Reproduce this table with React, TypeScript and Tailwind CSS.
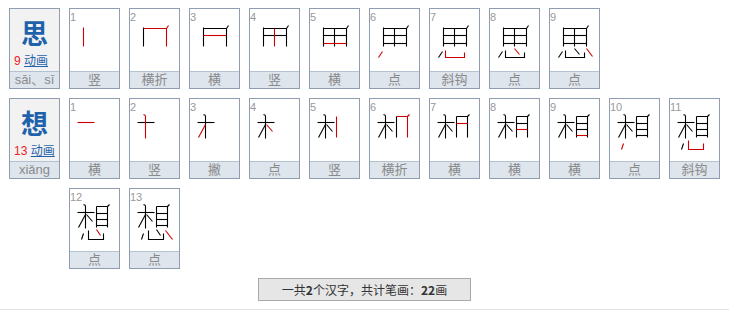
type Stroke = { name: string; lines: string[] };

// stroke drawings, coordinates measured from the card's outer top-left corner
const SI: Stroke[] = [
  { name: "竖", lines: ["14,19 14,38"] },
  { name: "横折", lines: ["14,20 37,20 37,38", "37,20 39,17"] },
  { name: "横", lines: ["14,27 37,27"] },
  { name: "竖", lines: ["25,20 25,38"] },
  { name: "横", lines: ["14,35 37,35"] },
  { name: "点", lines: ["13,43 9,49"] },
  { name: "斜钩", lines: ["16,42 16,49 35,49 35,44"] },
  { name: "点", lines: ["25,40 30,46"] },
  { name: "点", lines: ["37,40 43,48"] },
];

const XIANG: Stroke[] = [
  { name: "横", lines: ["8,24 25,24"] },
  { name: "竖", lines: ["16,17 16,40", "14,16 16,17"] },
  { name: "撇", lines: ["16,26 9,39"] },
  { name: "点", lines: ["17,26 23,33"] },
  { name: "竖", lines: ["27,18 27,39"] },
  { name: "横折", lines: ["27,18 38,18 38,39", "38,18 40,16"] },
  { name: "横", lines: ["27,25 38,25"] },
  { name: "横", lines: ["27,31 38,31"] },
  { name: "横", lines: ["27,37 38,37"] },
  { name: "点", lines: ["14,45 12,51"] },
  { name: "斜钩", lines: ["19,42 19,51 34,51 34,45"] },
  { name: "点", lines: ["27,41 31,47"] },
  { name: "点", lines: ["36,42 43,51"] },
];

function HeadCard({
  char,
  count,
  pinyin,
}: {
  char: string;
  count: number;
  pinyin: string;
}) {
  return (
    <div className="flex h-[81px] w-[51px] shrink-0 flex-col border border-[#8e9db0]">
      <div className="flex h-[62px] flex-col bg-[#f2f2f2]">
        <div className="mt-[13px] text-center text-[27px] font-bold leading-[26px] text-[#1e62ab]">
          {char}
        </div>
        <div className="mt-[6px] whitespace-nowrap pl-[4px] text-[12px] leading-[14px]">
          <span className="text-[#e8232b]">{count}</span>{" "}
          <span className="text-[#1e62ab] underline">动画</span>
        </div>
      </div>
      <div className="h-[17px] border-t border-[#b3c1d0] bg-[#dee5ed] text-center text-[13px] leading-[16px] text-[#8a8a8a]">
        {pinyin}
      </div>
    </div>
  );
}

function StrokeCard({
  strokes,
  index,
}: {
  strokes: Stroke[];
  index: number;
}) {
  const current = strokes[index];
  return (
    <div className="flex h-[81px] w-[51px] flex-col border border-[#8e9db0] bg-white">
      <div className="relative h-[62px]">
        <svg
          className="absolute inset-0"
          width={49}
          height={62}
          viewBox="0.5 0.5 49 62"
          fill="none"
        >
          {strokes.slice(0, index + 1).map((s, i) =>
            s.lines.map((pts, j) => (
              <polyline
                key={`${i}-${j}`}
                points={pts}
                stroke={i === index ? "#cc0000" : "#000"}
                strokeWidth={1.1}
              />
            )),
          )}
        </svg>
        <span className="absolute left-0 top-[2px] text-[11px] leading-[12px] text-[#999]">
          {index + 1}
        </span>
      </div>
      <div className="h-[17px] border-t border-[#b3c1d0] bg-[#dee5ed] text-center text-[13px] leading-[16px] text-[#8a8a8a]">
        {current.name}
      </div>
    </div>
  );
}

function CharRow({
  char,
  pinyin,
  strokes,
}: {
  char: string;
  pinyin: string;
  strokes: Stroke[];
}) {
  return (
    <div className="flex items-start gap-[9px]">
      <HeadCard char={char} count={strokes.length} pinyin={pinyin} />
      <div className="flex w-[651px] flex-wrap gap-[9px]">
        {strokes.map((_, i) => (
          <StrokeCard key={i} strokes={strokes} index={i} />
        ))}
      </div>
    </div>
  );
}

export default function App() {
  return (
    <div className="h-[311px] w-[729px] overflow-hidden bg-white font-['Liberation_Sans','Noto_Sans_CJK_SC',sans-serif]">
      <div className="flex flex-col gap-[9px] pl-[9px] pt-[8px]">
        <CharRow char="思" pinyin="sāi、sī" strokes={SI} />
        <CharRow char="想" pinyin="xiǎng" strokes={XIANG} />
      </div>
      <div className="mt-[9px] flex justify-center">
        <div className="h-[23px] w-[213px] border border-[#a8a8a8] bg-[#e6e6e6] text-center font-['Noto_Sans_CJK_SC',sans-serif] text-[12px] leading-[21px] text-[#333]">
          一共<b>2</b>个汉字，共计笔画：<b>22</b>画
        </div>
      </div>
      <div className="mt-[8px] border-t border-[#e3e3e3]" />
    </div>
  );
}
